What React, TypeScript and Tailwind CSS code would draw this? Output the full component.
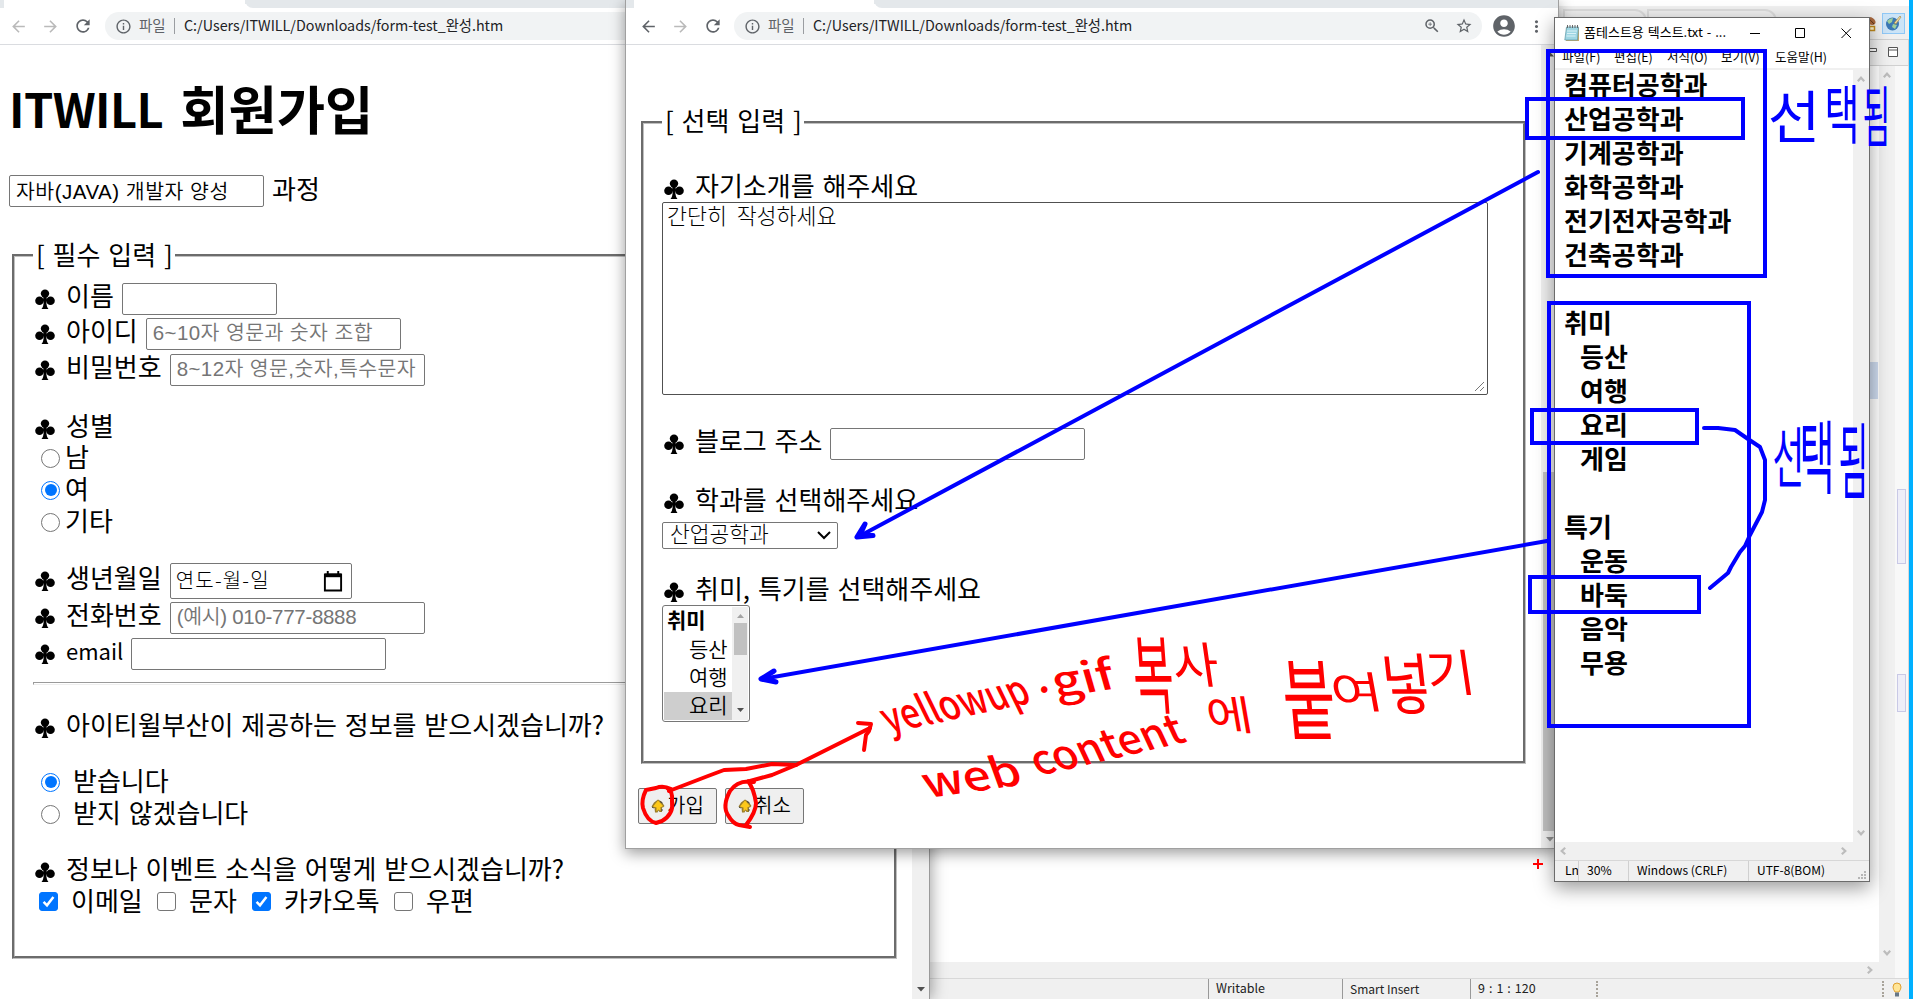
import React from "react";
import { MdArrowBack, MdArrowForward, MdRefresh, MdInfoOutline, MdStarBorder, MdZoomIn, MdAccountCircle, MdMoreVert } from "react-icons/md";

const label = "whitespace-nowrap text-[26px] leading-none [word-spacing:2px]";

function Club() {
  return (
    <svg className="ml-[2px] mr-[11px] h-5 w-5 shrink-0" viewBox="0 0 20 20" fill="#000">
      <circle cx="10" cy="4.6" r="4.2" />
      <circle cx="4.5" cy="11.8" r="4.3" />
      <circle cx="15.5" cy="11.8" r="4.3" />
      <path d="M8.5 8h3l.6 3.5-.8 1.5q.2 5 2.200 7H6.500q2-2 2.200-7L7.900 11.500z" />
    </svg>
  );
}

function Row({ className, text, children }: { className: string; text: string; children?: React.ReactNode }) {
  return (
    <div className={"flex items-center " + className}>
      <Club />
      <span className={"mr-2 pb-[9px] " + (text === "email" ? "text-[22px] leading-none" : label)}>{text}</span>
      {children}
    </div>
  );
}

function Field({ className, placeholder, value }: { className: string; placeholder?: string; value?: string }) {
  return (
    <input
      readOnly
      defaultValue={value}
      placeholder={placeholder}
      className={
        "h-8 rounded-[2px] border border-[#767676] bg-white px-[6px] pb-[3px] font-['Liberation_Sans','Noto_Sans_CJK_KR',sans-serif] text-[20.500px] font-[350] leading-none text-black placeholder:text-[#757575] " +
        className
      }
    />
  );
}

function Radio({ on, text, className }: { on?: boolean; text: string; className: string }) {
  return (
    <div className="flex h-8 items-center pl-2">
      <span className={"flex size-[19px] items-center justify-center rounded-full border-[1.5px] " + (on ? "border-[#0075ff]" : "border-[#767676]")}>
        {on && <span className="size-[12px] rounded-full bg-[#0075ff]" />}
      </span>
      <span className={label + " pb-[4px] " + className}>{text}</span>
    </div>
  );
}

function Check({ on, text, className }: { on?: boolean; text: string; className: string }) {
  return (
    <div className={"flex items-center " + className}>
      <span className={"flex size-[19px] items-center justify-center rounded-[3px] border " + (on ? "border-[#0075ff] bg-[#0075ff]" : "border-[#767676]")}>
        {on && (
          <svg viewBox="0 0 19 19" className="size-[19px]" fill="none" stroke="#fff" strokeWidth="2.800">
            <path d="M4 10l3.800 3.800L15 4.500" />
          </svg>
        )}
      </span>
      <span className={label + " ml-[13px] pb-[3px]"}>{text}</span>
    </div>
  );
}

function Toolbar({ front }: { front?: boolean }) {
  return (
    <header className="shrink-0">
      <div className="flex h-2 bg-[#e4e8eb]">
        <div className={"bg-white " + (front ? "ml-2 w-[240px]" : "ml-1 w-[241px]")} />
        <div className="h-2 flex-1 rounded-bl-[8px] bg-[#e4e8eb] shadow-[-4px_4px_0_#fff]" />
      </div>
      <div className="relative flex h-9 items-center bg-white">
        <MdArrowBack className={"size-[19px] " + (front ? "ml-[13px] text-[#5f6368]" : "ml-[9px] text-[#bababa]")} />
        <MdArrowForward className="ml-[13px] size-[19px] text-[#bababa]" />
        <MdRefresh className="ml-[13px] size-[20px] text-[#5f6368]" />
        <div className={"flex h-7 items-center rounded-l-full bg-[#f1f3f4] " + (front ? "ml-[11px] w-[748px] rounded-r-full" : "ml-3 flex-1")}>
          <MdInfoOutline className="ml-[10px] size-[17px] text-[#5f6368]" />
          <span className="ml-[7px] w-[28px] whitespace-nowrap pb-[2px] text-[14.500px] leading-none text-[#5f6368]">파일</span>
          <span className="ml-[7px] h-4 w-px bg-[#9a9da1]" />
          <span className="ml-[9px] w-[302px] whitespace-nowrap pb-[2px] text-[14.300px] leading-none text-[#202124]">
            C:/Users/ITWILL/Downloads/form-test_완성.htm
          </span>
          {front && (
            <>
              <MdZoomIn className="ml-auto size-[18px] text-[#5f6368]" />
              <MdStarBorder className="ml-[14px] mr-[9px] size-[18px] text-[#5f6368]" />
            </>
          )}
        </div>
        {front && (
          <>
            <MdAccountCircle className="ml-[9px] size-[26px] text-[#5f6368]" />
            <MdMoreVert className="ml-[10px] size-[19px] text-[#5f6368]" />
          </>
        )}
      </div>
      <div className="h-px bg-[#dadce0]" />
    </header>
  );
}

const groove = "border-[3px] border-[#c0c0c0] [border-style:groove]";

function BackBrowser() {
  return (
    <section className="absolute left-0 top-0 flex h-[999px] w-[930px] flex-col border-r border-[#9a9a9a] bg-white shadow-[2px_0_14px_rgba(0,0,0,0.35)]">
      <Toolbar />
      <div className="flex flex-1">
        <div className="w-[912px] pl-[9px]">
          <h1 className="flex h-[130px] items-center gap-[17px] pb-[5px] font-bold leading-none">
            <span className="text-[47px] tracking-[-0.600px]">ITWILL</span>
            <span className="text-[52.500px]">회원가입</span>
          </h1>
          <div className="flex h-8 items-center">
            <Field className="w-[255px] tracking-[0.500px]" value="자바(JAVA) 개발자 양성" />
            <span className={label + " ml-2 pb-[7px]"}>과정</span>
          </div>
          <fieldset className={"ml-[3px] mt-[33px] h-[719px] w-[885px] pl-[18px] " + groove}>
            <legend className="h-[30px] w-[142px] pl-[3px] pt-px">
              <span className={label}>[ 필수 입력 ]</span>
            </legend>
            <Row className="mt-3 h-[34px]" text="이름"><Field className="w-[155px]" /></Row>
            <Row className="h-9" text="아이디"><Field className="w-[255px] tracking-[0.400px]" placeholder="6~10자 영문과 숫자 조합" /></Row>
            <Row className="h-9" text="비밀번호"><Field className="w-[255px] tracking-[0.400px]" placeholder="8~12자 영문,숫자,특수문자" /></Row>
            <Row className="mt-7 h-[26px]" text="성별" />
            <Radio className="ml-[5px]" text="남" />
            <Radio className="ml-[5px]" text="여" on />
            <Radio className="ml-[5px]" text="기타" />
            <Row className="mt-[25px] h-9" text="생년월일">
              <div className="flex h-9 w-[182px] items-center justify-between rounded-[2px] border border-[#767676] px-[5px]">
                <span className="whitespace-nowrap pb-[3px] text-[20px] font-light leading-none tracking-[1.200px]">연도-월-일</span>
                <svg viewBox="0 0 20 22" className="mr-[3px] h-[21px] w-[20px]" fill="none" stroke="#000" strokeWidth="2">
                  <path d="M1.500 4h17v16.500h-17zM1 5h18M4.500 0v4M15.500 0v4" />
                  <path d="M1 4.500h18" strokeWidth="4" />
                </svg>
              </div>
            </Row>
            <Row className="h-[38px]" text="전화번호"><Field className="w-[255px] tracking-[-0.300px]" placeholder="(예시) 010-777-8888" /></Row>
            <Row className="mt-px h-8" text="email"><Field className="w-[255px]" /></Row>
            <div className="mr-[18px] mt-3 h-[3px] border-b border-l border-t border-b-[#eee] border-l-[#9a9a9a] border-t-[#9a9a9a]" />
            <Row className="mt-[30px] h-[26px]" text="아이티윌부산이 제공하는 정보를 받으시겠습니까?" />
            <div className="h-[25px]" />
            <Radio className="ml-[13px]" text="받습니다" on />
            <Radio className="ml-[13px]" text="받지 않겠습니다" />
            <Row className="mt-[29px] h-[26px]" text="정보나 이벤트 소식을 어떻게 받으시겠습니까?" />
            <div className="flex h-8 items-center pl-[6px]">
              <Check className="w-[118px]" text="이메일" on />
              <Check className="w-[95px]" text="문자" />
              <Check className="w-[142px]" text="카카오톡" on />
              <Check className="w-[90px]" text="우편" />
            </div>
          </fieldset>
        </div>
        <div className="flex flex-1 items-end justify-center bg-[#f0f0f0] pb-[7px]">
          <svg width="8" height="5"><path d="M0 0h8L4 4.500z" fill="#505050" /></svg>
        </div>
      </div>
    </section>
  );
}

function UpIcon() {
  return (
    <svg viewBox="0 0 14 14" className="size-[14px] shrink-0">
      <path d="M7 .5L10.500 2.500 13.500 7 12 8.500H11V13H8.500L7.500 11.500 6.500 13.500H4L3.500 9H2L.5 7.500 3 3.500z" fill="#9a7d2a" />
      <path d="M7 1.500L12 7 10.500 8H9.500v4L7.500 10.500 5.500 12.500V8.500L2 7.500z" fill="#fdc81a" />
      <path d="M9 2.500l2.500 1.500M1 8l1.500 1M11 10v2" stroke="#444" />
    </svg>
  );
}

function FrontBrowser() {
  return (
    <section className="absolute left-[625px] top-0 flex h-[849px] w-[934px] flex-col border-x border-b border-[#a0a0a0] bg-white shadow-[0_4px_14px_rgba(0,0,0,0.4)]">
      <Toolbar front />
      <div className="flex flex-1">
        <div className="w-[915px] pl-3 pt-[62px]">
          <fieldset className={"ml-[3px] h-[657px] w-[885px] pl-[18px] " + groove}>
            <legend className="h-[30px] w-[142px] pl-[3px]"><span className={label}>[ 선택 입력 ]</span></legend>
            <Row className="mt-[39px] h-[26px]" text="자기소개를 해주세요" />
            <div className="relative h-[193px] w-[826px] rounded-[2px] border border-[#505050] pl-1 pt-px">
              <span className="block text-[21.700px] font-light leading-none [word-spacing:5px]">간단히 작성하세요</span>
              <svg className="absolute bottom-[2px] right-[2px]" width="10" height="10" stroke="#777"><path d="M0 9L9 0M5 9l4-4" /></svg>
            </div>
            <Row className="mt-[33px] h-8" text="블로그 주소"><Field className="w-[255px]" /></Row>
            <Row className="mt-[30px] h-[26px]" text="학과를 선택해주세요" />
            <div className="mt-[6px] flex h-[27px] w-[176px] items-center justify-between rounded-[2px] border border-[#767676] pl-[7px] pr-[6px]">
              <span className="pb-[6px] text-[21.500px] font-light leading-none">산업공학과</span>
              <svg width="14" height="9" fill="none" stroke="#000" strokeWidth="2"><path d="M1 1l6 6 6-6" /></svg>
            </div>
            <Row className="mt-[30px] h-[26px]" text="취미, 특기를 선택해주세요" />
            <div className="flex h-[117px] w-[88px] rounded-[3px] border border-[#767676] p-px text-[21px] leading-none">
              <ul className="w-[68px] font-[350]">
                <li className="flex h-[29px] items-center pb-[5px] pl-[3px] font-bold">취미</li>
                <li className="flex h-[28px] items-center pb-[4px] pl-[25px]">등산</li>
                <li className="flex h-[28px] items-center pb-[4px] pl-[25px]">여행</li>
                <li className="flex h-[28px] items-center bg-[#cecece] pb-[3px] pl-[25px]">요리</li>
              </ul>
              <div className="flex flex-1 flex-col items-center bg-[#f0f0f0] pb-2 pt-[7px]">
                <svg width="7" height="4"><path d="M0 4h7L3.500 0z" fill="#a3a3a3" /></svg>
                <div className="mt-[5px] h-8 w-[13px] bg-[#c1c1c1]" />
                <svg className="mt-auto" width="7" height="4"><path d="M0 0h7L3.500 4z" fill="#505050" /></svg>
              </div>
            </div>
          </fieldset>
          <div className="mt-6 flex gap-2">
            {["가입", "취소"].map((t) => (
              <button key={t} className="flex h-9 w-[79px] items-center rounded-[2px] border border-[#767676] bg-[#efefef] pl-3 text-[20px] font-[350] leading-none">
                <UpIcon />
                <span className="ml-[2px] whitespace-nowrap pb-[3px]">{t}</span>
              </button>
            ))}
          </div>
        </div>
        <div className="flex flex-1 flex-col items-center bg-[#f0f0f0] pt-[7px]">
          <svg width="8" height="5"><path d="M0 4.500h8L4 0z" fill="#505050" /></svg>
          <div className="mt-[415px] h-[359px] w-[13px] bg-[#c1c1c1]" />
          <svg className="mt-[6px]" width="8" height="5"><path d="M0 0h8L4 4.500z" fill="#909090" /></svg>
        </div>
      </div>
    </section>
  );
}

const notes: [string, boolean][] = [
  ["컴퓨터공학과", false], ["산업공학과", false], ["기계공학과", false], ["화학공학과", false], ["전기전자공학과", false], ["건축공학과", false], ["", false],
  ["취미", false], ["등산", true], ["여행", true], ["요리", true], ["게임", true], ["", false],
  ["특기", false], ["운동", true], ["바둑", true], ["음악", true], ["무용", true],
];

function Chevron({ className }: { className?: string }) {
  return (
    <svg className={"shrink-0 " + (className ?? "")} width="8" height="6" fill="none" stroke="#bcbcbc" strokeWidth="2.200">
      <path d="M.8.8L4 4.300 7.200.8" />
    </svg>
  );
}

function Notepad() {
  return (
    <section className="absolute left-[1554px] top-[17px] flex h-[865px] w-[316px] flex-col border border-[#6b6b6b] bg-white shadow-[0_6px_18px_rgba(0,0,0,0.4)]">
      <div className="flex h-[30px] shrink-0 items-center pl-[9px] pr-[17px]">
        <svg width="16" height="17" viewBox="0 0 16 17">
          <path d="M2 3h13v13H2z" fill="#c9a968" />
          <path d="M2.500 2h12l-1 13H.8z" fill="#9fd6e3" stroke="#5c95a5" strokeWidth=".7" />
          <path d="M3 6h10M3 8.500h9M2.500 11h9" stroke="#d9f1f6" />
          <path d="M3.500 0v3M6 0v3M8.500 0v3M11 0v3M13.500 0v3" stroke="#666" />
        </svg>
        <span className="ml-1 whitespace-nowrap pb-[3px] text-[13px] leading-none [word-spacing:1px]">폼테스트용 텍스트.txt - ...</span>
        <svg className="ml-auto" width="102" height="12" fill="none" stroke="#000">
          <path d="M0 6.500h10M45.500 1.500h9v9h-9zM91.500 1.500l9.500 9.500M101 1.500L91.500 11" />
        </svg>
      </div>
      <div className="flex h-[20px] shrink-0 items-center gap-[14px] pb-[2px] pl-[7px] text-[12.500px] leading-none text-black">
        <span className="w-[38px] whitespace-nowrap">파일(F)</span>
        <span className="w-[39px] whitespace-nowrap">편집(E)</span>
        <span className="w-[40px] whitespace-nowrap">서식(O)</span>
        <span className="w-[40px] whitespace-nowrap">보기(V)</span>
        <span className="w-[54px] whitespace-nowrap">도움말(H)</span>
      </div>
      <div className="flex h-[774px] shrink-0 border-t-2 border-[#f0f0f0]">
        <div className="-mt-[3px] w-[298px] pl-[9px] text-[26px] font-bold leading-[34px]">
          {notes.map(([t, indent], i) => (
            <div key={i} className={"h-[34px] " + (indent ? "pl-[16px]" : "")}>{t}</div>
          ))}
        </div>
        <div className="flex flex-1 flex-col items-center justify-between bg-[#f0f0f0] py-[6px]">
          <Chevron className="rotate-180" />
          <Chevron />
        </div>
      </div>
      <div className="flex h-[18px] shrink-0 items-center justify-between bg-[#f0f0f0] pl-1 pr-[21px]">
        <Chevron className="rotate-90" />
        <Chevron className="-rotate-90" />
      </div>
      <div className="flex flex-1 items-center border-t border-[#d7d7d7] bg-[#f0f0f0] text-[12.200px] leading-none">
        <span className="flex h-5 w-6 items-center overflow-hidden border-r border-[#d0d0d0] pb-[2px] pl-[10px]">Ln</span>
        <span className="flex h-5 w-[50px] items-center border-r border-[#d0d0d0] pb-[2px] pl-2">30%</span>
        <span className="flex h-5 w-[120px] items-center whitespace-nowrap border-r border-[#d0d0d0] pb-[2px] pl-2 text-[12px]">Windows (CRLF)</span>
        <span className="pb-[2px] pl-2 text-[12px]">UTF-8(BOM)</span>
        <svg className="ml-auto mr-[2px] mt-2" width="9" height="9" fill="#b5b5b5">
          <path d="M6 0h2v2H6zM3 3h2v2H3zM6 3h2v2H6zM0 6h2v2H0zM3 6h2v2H3zM6 6h2v2H6z" />
        </svg>
      </div>
    </section>
  );
}

function Ide() {
  return (
    <section className="flex h-[999px] w-[1913px] bg-[#f0f0f0]">
      <div className="flex w-[1909px] flex-col">
        <div className="h-[6px] bg-white" />
        <div className="flex h-[34px] items-start justify-end gap-[5px] border-b border-[#d0d0d0] pr-[4px] pt-[7px]">
          <div className="ml-[1563px] mr-auto mt-[-4px] flex h-[26px] w-[216px]">
            <div className="w-[84px] rounded-tr-[12px] border-2 border-[#dcdcdc]" />
            <div className="w-[130px] rounded-tr-[12px] border-2 border-[#dcdcdc]" />
          </div>
          <svg className="mt-[2px]" width="12" height="18">
            <ellipse cx="6" cy="6" rx="5" ry="3.500" fill="#a8683e" transform="rotate(35 6 6)" />
            <path d="M2 3q4 2 7 6" stroke="#5d3317" fill="none" />
            <path d="M4.500 11.500h5v4h-5z" fill="#fff4cf" stroke="#c08a1c" strokeWidth="1.500" />
          </svg>
          <div className="flex h-[21px] w-[23px] items-center justify-center border border-[#90c8f6] bg-[#cce4f7]">
            <svg width="17" height="17">
              <circle cx="7.500" cy="9" r="6.500" fill="#3b78b5" />
              <path d="M2 6q3-3 6-3l-1 4-3 2zM8 9l4 1-2 4-3-2z" fill="#9fcf9c" />
              <path d="M9 8l6-7 1 1-5 7z" fill="#f2dba0" stroke="#9c7b36" strokeWidth=".6" />
            </svg>
          </div>
        </div>
        <div className="flex h-[26px] items-center justify-end gap-[11px] border-b border-r border-[#d0d0d0] pr-[9px]">
          <svg width="10" height="10" fill="#fff" stroke="#555"><path d="M.5.5h9v3h-9z" /></svg>
          <svg width="11" height="11" fill="#fff" stroke="#555"><path d="M.5.5h9v9h-9zM.5 3h9" /></svg>
        </div>
        <div className="flex flex-1">
          <div className="flex w-[1879px] flex-col">
            <div className="flex-1 bg-white pt-[296px]"><div className="ml-auto mr-[1px] h-[37px] w-[9px] bg-[#cfdcf0]" /></div>
            <div className="flex h-4 items-center justify-end pr-[5px]"><Chevron className="-rotate-90" /></div>
          </div>
          <div className="flex w-4 flex-col items-center justify-between pb-[22px] pt-[6px]">
            <Chevron className="rotate-180" />
            <Chevron />
          </div>
          <div className="flex flex-1 flex-col items-center border-r border-[#d8d8d8] bg-[#f8f8f8]">
            <div className="mt-[423px] h-[75px] w-[9px] border border-[#c9c9e6] bg-[#eeeef8]" />
            <div className="mt-[110px] h-[38px] w-[9px] border border-[#c9c9e6] bg-[#eeeef8]" />
          </div>
        </div>
        <div className="flex h-[21px] items-center border-t border-[#d8d8d8] pl-[1208px] text-[12.500px] leading-none text-[#222]">
          <span className="flex h-5 w-[134px] items-center border-l border-[#999] pb-px pl-[7px]">Writable</span>
          <span className="flex h-5 w-[128px] items-center border-l border-[#999] pb-px pl-[7px] text-[12px]">Smart Insert</span>
          <span className="flex h-5 w-[126px] items-center border-l border-[#999] pb-px pl-[7px] [word-spacing:1.200px]">9 : 1 : 120</span>
          <span className="h-4 w-[286px] border-l-2 border-dotted border-[#a8a39a]" />
          <span className="h-4 w-[9px] border-l-2 border-dotted border-[#a8a39a]" />
          <svg width="12" height="15"><path d="M2 5a4 4 0 018 0q0 2-2 5H4Q2 7 2 5z" fill="#ffe596" stroke="#e0a030" /><path d="M4 10.500h4v4H4z" fill="#667788" /></svg>
        </div>
      </div>
      <div className="flex-1 bg-[#00b0ff]" />
    </section>
  );
}

type Mark = [string, number, number, number, number];

const blueNotes: Mark[] = [
  ["선", 1770, 92, 48, 50], ["택", 1826, 86, 32, 56], ["됨", 1864, 88, 25, 58],
  ["선", 1774, 429, 29, 58], ["택", 1801, 423, 32, 70], ["됨", 1840, 425, 27, 73],
];
const redNotes: Mark[] = [
  ["복", 1137, 637, 37, 76], ["사", 1177, 643, 42, 43], ["에", 1211, 697, 42, 36],
  ["붙", 1288, 661, 48, 78], ["여", 1336, 673, 47, 38], ["넣", 1387, 655, 45, 59], ["기", 1431, 650, 44, 44],
];

function fit([, x, y, w, h]: Mark, slant: number) {
  return `translate(${x} ${y}) scale(${w / 84} ${h / 88}) translate(-4 81) skewX(${slant})`;
}

function Annotations() {
  return (
    <svg className="pointer-events-none absolute left-0 top-0" width="1913" height="999" fill="none" strokeWidth="4" strokeLinecap="round" strokeLinejoin="round">
      <g stroke="#0000ff">
        <g strokeLinejoin="miter">
          <rect x="1548" y="51" width="217" height="225" />
          <rect x="1527" y="99" width="216" height="39" />
          <rect x="1549" y="303" width="200" height="423" />
          <rect x="1532" y="410" width="165" height="33" />
          <rect x="1530" y="577" width="169" height="35" />
        </g>
        <path d="M1538 172L858 537" />
        <path d="M865 524L857 537 873 535.500 860 535z" strokeWidth="5" />
        <path d="M1547 541L762 679" />
        <path d="M774 671L761 679 776 682 763 678z" strokeWidth="5" />
        <path d="M1704 428L1718 428 1735 430 1748 439 1760 447 1765 460 1765 500 1762 512 1750 535 1745 546 1740 552 1731 567 1728 573 1710 588" />
      </g>
      <g stroke="#ff0000">
        <path d="M671 789Q663 785 656 788L646 790Q641 800 643 808 647 821 656 823L662 821Q674 814 672 801 673 791 667 788" />
        <path d="M754 782Q738 779 730 791 722 806 728 815 733 824 739 825L750 827 746 825Q756 812 756 803 754 789 748 781" />
        <path d="M669 791L708 776 724 770 746 769 772 764 796 765 858 734 870 728" />
        <path d="M750 781L772 775 796 765" />
        <path d="M858 723L871 724 869 731 866 735 864 750" />
        <path d="M1533 864h10M1538 859v10" strokeWidth="2" strokeLinecap="butt" />
      </g>
      <g fill="#0000ff" className="text-[100px] font-normal">
        {blueNotes.map((n) => <text key={n[1]} transform={fit(n, 0)}>{n[0]}</text>)}
      </g>
      <g fill="#ff0000" className="text-[100px] font-normal">
        {redNotes.map((n) => <text key={n[1]} transform={fit(n, 8)}>{n[0]}</text>)}
      </g>
      <g fill="#ff0000" className="text-[42px] font-medium">
        <text transform="translate(889 733) rotate(-12) skewX(14)" textLength="148" lengthAdjust="spacingAndGlyphs">yellowup</text>
        <text transform="translate(1038 692)">.</text>
        <text transform="translate(1056 697) rotate(-8) skewX(8)" textLength="62" lengthAdjust="spacingAndGlyphs">gif</text>
        <text transform="translate(928 798) rotate(-8) skewX(12)" textLength="98" lengthAdjust="spacingAndGlyphs">web</text>
        <text transform="translate(1038 776) rotate(-13) skewX(12)" textLength="154" lengthAdjust="spacingAndGlyphs">content</text>
      </g>
    </svg>
  );
}

export default function App() {
  return (
    <main className="relative h-[999px] w-[1913px] overflow-hidden font-['Noto_Sans_CJK_KR',sans-serif] text-black">
      <Ide />
      <BackBrowser />
      <FrontBrowser />
      <Notepad />
      <Annotations />
    </main>
  );
}
